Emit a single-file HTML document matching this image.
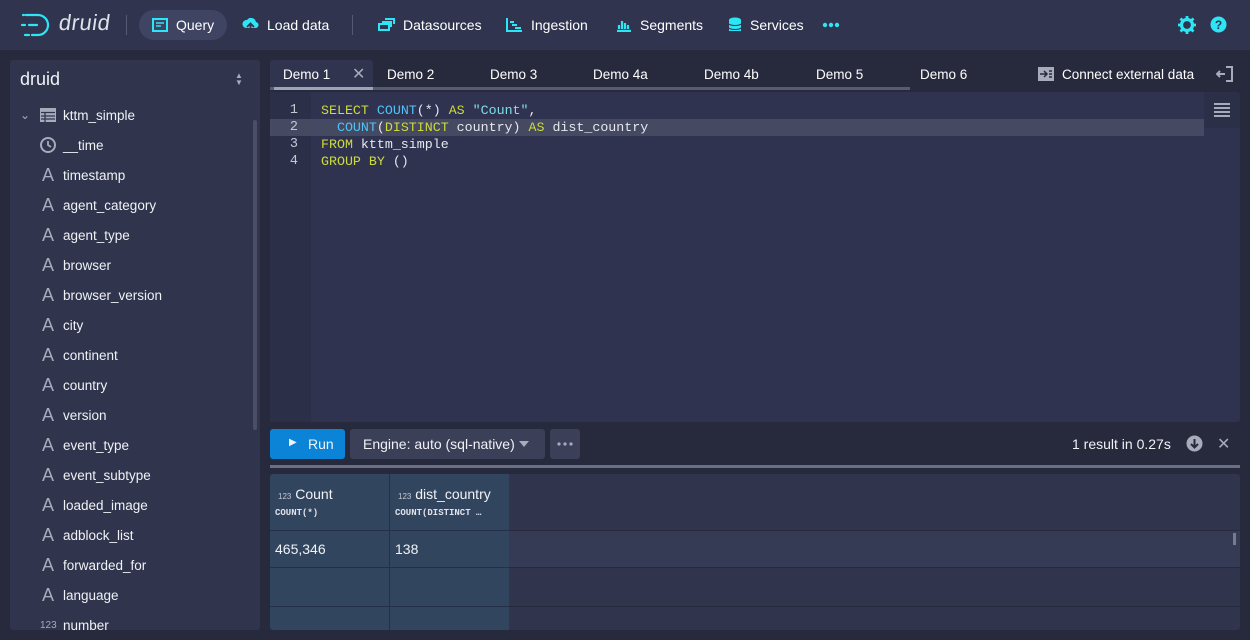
<!DOCTYPE html>
<html><head><style>
*{box-sizing:border-box;margin:0;padding:0}
body{width:1250px;height:640px;background:#262a3c;font-family:"Liberation Sans",sans-serif;color:#f0f2f5;font-size:14px;position:relative;overflow:hidden}
.nav{position:absolute;left:0;top:0;width:1250px;height:50px;background:#30344e}
.ni{position:absolute;top:14px;font-size:14px;color:#fff;display:flex;align-items:center;gap:8px;height:22px}
.abs{position:absolute}
.side{position:absolute;left:10px;top:60px;width:250px;height:570px;background:#30344d;border-radius:3px;overflow:hidden}
.row{position:absolute;left:0;height:30px;display:flex;align-items:center;font-size:13.5px}
.ic{position:absolute;left:30px;width:16px;text-align:center;color:#a7abbb;font-size:18px}
.lbl{position:absolute;left:53px}
.tab{position:absolute;top:60px;height:30px;line-height:29px;font-size:13.5px;color:#fff}
.code{position:absolute;font-family:"Liberation Mono",monospace;font-size:13.3px;left:321px;line-height:17px;white-space:pre;color:#e6e8ee}
.kw{color:#cddc39}.fn{color:#4fc3f7}.st{color:#80deea}
.ln{position:absolute;left:270px;width:28px;text-align:right;font-family:"Liberation Mono",monospace;font-size:13.5px;line-height:17px;color:#c5c8d2}
</style></head><body>
<div class="nav">
 <svg class="abs" style="left:20px;top:12px" width="34" height="26" viewBox="0 0 34 26"><path d="M6 3h12a10 10 0 0 1 0 20h-6M3 3h1M9 13h8M5 23h4M2 13h3" stroke="#2ce5f5" stroke-width="2.2" fill="none" stroke-linecap="round"/></svg>
 <div class="abs" style="left:59px;top:10px;font-size:22px;color:#dfe2ea;font-family:'Liberation Sans',sans-serif;letter-spacing:0.5px;transform:skewX(-8deg)">druid</div>
 <div class="abs" style="left:126px;top:15px;width:1px;height:20px;background:#555a70"></div>
 <div class="abs" style="left:139px;top:10px;width:88px;height:30px;border-radius:15px;background:#3f4463"></div>
 <div class="ni" style="left:152px"><svg width="16" height="14"><rect x="1" y="1" width="14" height="12" fill="none" stroke="#2ce5f5" stroke-width="2"/><path d="M4 5h8M4 8h5" stroke="#2ce5f5" stroke-width="1.5"/></svg>Query</div>
 <div class="ni" style="left:242px"><svg width="17" height="16"><path d="M4 11a4 4 0 0 1 1-8 5 5 0 0 1 9 2 3 3 0 0 1-1 6z" fill="#2ce5f5"/><path d="M8.5 15V7M5 10l3.5-3.5L12 10" stroke="#30344e" stroke-width="1.8" fill="none"/></svg>Load data</div>
 <div class="abs" style="left:352px;top:15px;width:1px;height:20px;background:#555a70"></div>
 <div class="ni" style="left:378px"><svg width="17" height="14"><rect x="1" y="6" width="10" height="6" fill="none" stroke="#2ce5f5" stroke-width="2"/><path d="M4 4h9v5M7 1h9v5" stroke="#2ce5f5" stroke-width="2" fill="none"/></svg>Datasources</div>
 <div class="ni" style="left:506px"><svg width="17" height="14"><path d="M1 0v13h15M4 4h4M6 7h5M9 10h6" stroke="#2ce5f5" stroke-width="2" fill="none"/></svg>Ingestion</div>
 <div class="ni" style="left:616px"><svg width="16" height="14"><path d="M1 13h14M3 7v4M6 3v8M9 5v6M12 7v4" stroke="#2ce5f5" stroke-width="2.2"/></svg>Segments</div>
 <div class="ni" style="left:728px"><svg width="14" height="16"><ellipse cx="7" cy="3" rx="6" ry="2.5" fill="#2ce5f5"/><rect x="1" y="3" width="12" height="11" fill="#2ce5f5"/><path d="M1 7c2 2 10 2 12 0M1 11c2 2 10 2 12 0" stroke="#30344e" fill="none"/></svg>Services</div>
 <svg class="abs" style="left:822px;top:22px" width="18" height="6"><circle cx="3" cy="3" r="2.2" fill="#2ce5f5"/><circle cx="9" cy="3" r="2.2" fill="#2ce5f5"/><circle cx="15" cy="3" r="2.2" fill="#2ce5f5"/></svg>
 <svg class="abs" style="left:1178px;top:16px" width="18" height="18" viewBox="0 0 18 18"><circle cx="9" cy="9" r="5.5" fill="none" stroke="#2ce5f5" stroke-width="3.2"/><path d="M9 0v4M9 14v4M0 9h4M14 9h4M2.5 2.5l3 3M12.5 12.5l3 3M2.5 15.5l3-3M12.5 5.5l3-3" stroke="#2ce5f5" stroke-width="2.8"/></svg>
 <svg class="abs" style="left:1210px;top:16px" width="17" height="17"><circle cx="8.5" cy="8.5" r="8" fill="#2ce5f5"/><text x="8.5" y="13" text-anchor="middle" font-family="Liberation Sans" font-weight="bold" font-size="12" fill="#30344e">?</text></svg>
</div>

<div class="side">
 <div class="abs" style="left:10px;top:9px;font-size:18px">druid</div>
 <div class="abs" style="left:225px;top:12px;color:#a7abbb;font-size:8px;line-height:7px">▲<br>▼</div>
 <div class="abs" style="left:243px;top:60px;width:4px;height:310px;background:#4a4f66;border-radius:2px"></div>
 <div class="row" style="top:40px"><span class="abs" style="left:10px;color:#a7abbb;font-size:12px">⌄</span>
  <svg class="abs" style="left:30px" width="16" height="14"><rect x="0" y="0" width="16" height="14" fill="#a7abbb"/><path d="M1 4.5h14M1 8h14M1 11h14M5 4v10" stroke="#30344d" stroke-width="1.3"/></svg>
  <span class="lbl">kttm_simple</span></div>
 <div class="row" style="top:70px"><svg class="abs" style="left:30px" width="16" height="16"><circle cx="8" cy="8" r="7" fill="none" stroke="#a7abbb" stroke-width="2"/><path d="M8 4v4l3 2" stroke="#a7abbb" stroke-width="1.8" fill="none"/></svg><span class="lbl">__time</span></div>
 <div class="row" style="top:100px"><span class="ic">A</span><span class="lbl">timestamp</span></div>
 <div class="row" style="top:130px"><span class="ic">A</span><span class="lbl">agent_category</span></div>
 <div class="row" style="top:160px"><span class="ic">A</span><span class="lbl">agent_type</span></div>
 <div class="row" style="top:190px"><span class="ic">A</span><span class="lbl">browser</span></div>
 <div class="row" style="top:220px"><span class="ic">A</span><span class="lbl">browser_version</span></div>
 <div class="row" style="top:250px"><span class="ic">A</span><span class="lbl">city</span></div>
 <div class="row" style="top:280px"><span class="ic">A</span><span class="lbl">continent</span></div>
 <div class="row" style="top:310px"><span class="ic">A</span><span class="lbl">country</span></div>
 <div class="row" style="top:340px"><span class="ic">A</span><span class="lbl">version</span></div>
 <div class="row" style="top:370px"><span class="ic">A</span><span class="lbl">event_type</span></div>
 <div class="row" style="top:400px"><span class="ic">A</span><span class="lbl">event_subtype</span></div>
 <div class="row" style="top:430px"><span class="ic">A</span><span class="lbl">loaded_image</span></div>
 <div class="row" style="top:460px"><span class="ic">A</span><span class="lbl">adblock_list</span></div>
 <div class="row" style="top:490px"><span class="ic">A</span><span class="lbl">forwarded_for</span></div>
 <div class="row" style="top:520px"><span class="ic">A</span><span class="lbl">language</span></div>
 <div class="row" style="top:550px"><span class="abs" style="left:30px;font-size:10px;color:#a7abbb">123</span><span class="lbl">number</span></div>
</div>

<div class="abs" style="left:270px;top:60px;width:103px;height:30px;background:#30344e;border-radius:3px 3px 0 0"></div>
<div class="abs" style="left:270px;top:87px;width:640px;height:3px;background:#575c70"></div>
<div class="abs" style="left:274px;top:87px;width:99px;height:3px;background:#9ea3b8"></div>
<div class="tab" style="left:283px">Demo 1</div>
<div class="tab" style="left:352px;color:#a7abbb;font-size:16px">✕</div>
<div class="tab" style="left:387px">Demo 2</div>
<div class="tab" style="left:490px">Demo 3</div>
<div class="tab" style="left:593px">Demo 4a</div>
<div class="tab" style="left:704px">Demo 4b</div>
<div class="tab" style="left:816px">Demo 5</div>
<div class="tab" style="left:920px">Demo 6</div>
<svg class="abs" style="left:1038px;top:67px" width="16" height="14"><rect x="0" y="0" width="16" height="14" fill="#a7abbb"/><path d="M2 7h7M6 4l3 3-3 3M11 4h3M11 7h3M11 10h3" stroke="#262a3c" stroke-width="1.5" fill="none"/></svg>
<div class="tab" style="left:1062px">Connect external data</div>
<svg class="abs" style="left:1216px;top:66px" width="18" height="16"><path d="M10 1h6v14h-6" stroke="#a7abbb" stroke-width="2" fill="none"/><path d="M1 8h8M4 5L1 8l3 3" stroke="#a7abbb" stroke-width="2" fill="none"/></svg>

<div class="abs" style="left:270px;top:92px;width:970px;height:330px;background:#2f3350;border-radius:3px"></div>
<div class="abs" style="left:270px;top:92px;width:41px;height:330px;background:#2b2f48"></div>
<div class="abs" style="left:270px;top:119px;width:934px;height:17px;background:#454961"></div>
<div class="abs" style="left:1204px;top:92px;width:36px;height:36px;background:#2b2f48;border-radius:0 3px 3px 3px"></div>
<svg class="abs" style="left:1214px;top:103px" width="16" height="14"><path d="M0 1h16M0 5h16M0 9h16M0 13h16" stroke="#a7abbb" stroke-width="2"/></svg>
<div class="ln" style="top:102px">1</div><div class="ln" style="top:119px">2</div><div class="ln" style="top:136px">3</div><div class="ln" style="top:153px">4</div>
<div class="code" style="top:102px"><span class="kw">SELECT</span> <span class="fn">COUNT</span>(*) <span class="kw">AS</span> <span class="st">"Count"</span>,
  <span class="fn">COUNT</span>(<span class="kw">DISTINCT</span> country) <span class="kw">AS</span> dist_country
<span class="kw">FROM</span> kttm_simple
<span class="kw">GROUP BY</span> ()</div>

<div class="abs" style="left:270px;top:429px;width:75px;height:30px;background:#0b84d8;border-radius:3px"></div>
<div class="abs" style="left:289px;top:437px;font-size:10px">▶</div>
<div class="abs" style="left:308px;top:436px">Run</div>
<div class="abs" style="left:350px;top:429px;width:195px;height:30px;background:#3b3f58;border-radius:3px"></div>
<div class="abs" style="left:363px;top:436px">Engine: auto (sql-native)</div>
<svg class="abs" style="left:519px;top:441px" width="10" height="6"><path d="M0 0h10L5 6z" fill="#a7abbb"/></svg>
<div class="abs" style="left:550px;top:429px;width:30px;height:30px;background:#3b3f58;border-radius:3px"></div>
<svg class="abs" style="left:557px;top:442px" width="16" height="4"><circle cx="2" cy="2" r="1.6" fill="#a7abbb"/><circle cx="8" cy="2" r="1.6" fill="#a7abbb"/><circle cx="14" cy="2" r="1.6" fill="#a7abbb"/></svg>
<div class="abs" style="left:1072px;top:436px">1 result in 0.27s</div>
<svg class="abs" style="left:1186px;top:435px" width="17" height="17"><circle cx="8.5" cy="8.5" r="8" fill="#a7abbb"/><path d="M8.5 4v8M5 9l3.5 3.5L12 9" stroke="#262a3c" stroke-width="2" fill="none"/></svg>
<div class="abs" style="left:1217px;top:434px;color:#a7abbb;font-size:16px">✕</div>
<div class="abs" style="left:270px;top:465px;width:970px;height:3px;background:#6b6f86"></div>

<div class="abs" style="left:270px;top:474px;width:970px;height:156px;background:#30344d;border-radius:3px;overflow:hidden">
 <div class="abs" style="left:0;top:56px;width:970px;height:37px;background:#353a55;border-top:1px solid #262a3c"></div>
 <div class="abs" style="left:0;top:93px;width:970px;height:1px;background:#262a3c"></div>
 <div class="abs" style="left:0;top:132px;width:970px;height:1px;background:#262a3c"></div>
 <div class="abs" style="left:0;top:0;width:239px;height:156px;background:#32455f"></div>
 <div class="abs" style="left:0;top:56px;width:239px;height:1px;background:#253048"></div>
 <div class="abs" style="left:0;top:93px;width:239px;height:1px;background:#253048"></div>
 <div class="abs" style="left:0;top:132px;width:239px;height:1px;background:#253048"></div>
 <div class="abs" style="left:119px;top:0;width:1px;height:156px;background:#253048"></div>
 <div class="abs" style="left:8px;top:12px"><span style="font-size:8px;color:#c5c8d2">123</span> Count</div>
 <div class="abs" style="left:5px;top:34px;font-family:'Liberation Mono',monospace;font-size:9px;font-weight:bold;color:#e0e2ea">COUNT(*)</div>
 <div class="abs" style="left:128px;top:12px"><span style="font-size:8px;color:#c5c8d2">123</span> dist_country</div>
 <div class="abs" style="left:125px;top:34px;font-family:'Liberation Mono',monospace;font-size:9px;font-weight:bold;color:#e0e2ea">COUNT(DISTINCT …</div>
 <div class="abs" style="left:5px;top:67px">465,346</div>
 <div class="abs" style="left:125px;top:67px">138</div>
 <div class="abs" style="left:963px;top:59px;width:3px;height:12px;background:#777b8e"></div>
</div>
</body></html>
